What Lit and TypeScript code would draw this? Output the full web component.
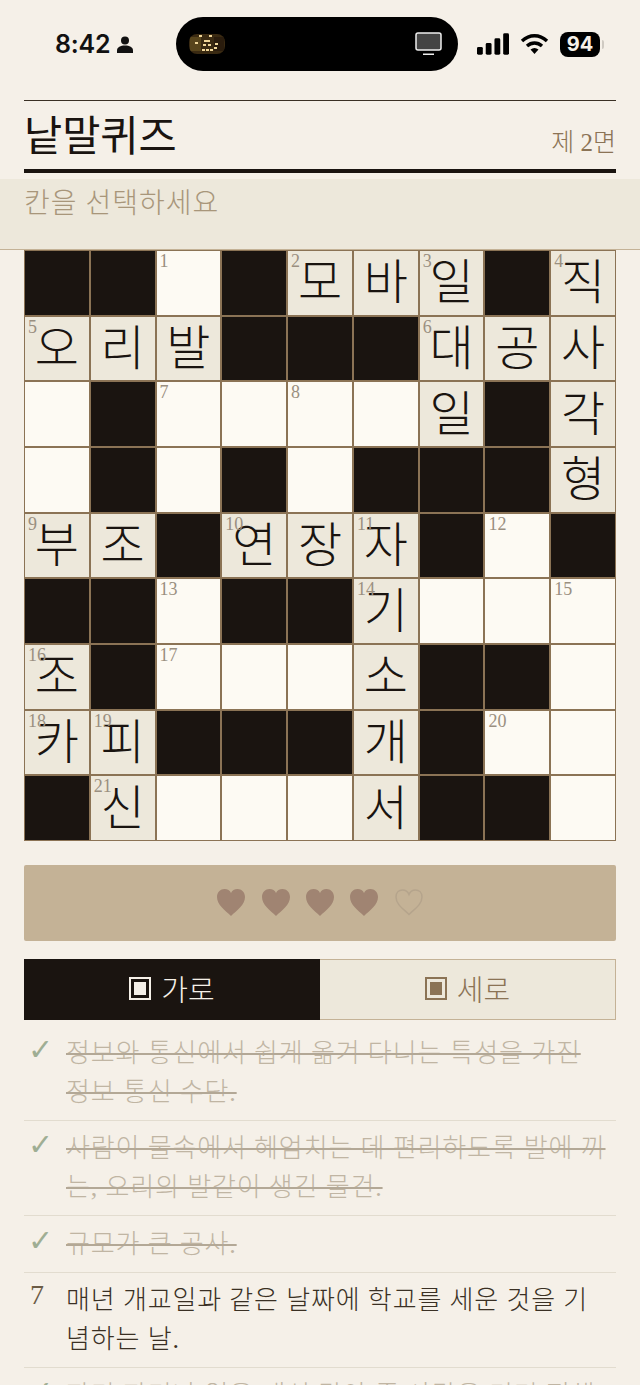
import { LitElement, html, css, svg } from "lit";
import { customElement } from "lit/decorators.js";

type Cell = { k: "b" } | { k: "w"; n?: string; t?: string };
const B: Cell = { k: "b" };
const w = (n?: string, t?: string): Cell => ({ k: "w", n, t });
const GRID: Cell[][] = [
  [B, B, w("1"), B, w("2", "모"), w("", "바"), w("3", "일"), B, w("4", "직")],
  [w("5", "오"), w("", "리"), w("", "발"), B, B, B, w("6", "대"), w("", "공"), w("", "사")],
  [w(), B, w("7"), w(), w("8"), w(), w("", "일"), B, w("", "각")],
  [w(), B, w(), B, w(), B, B, B, w("", "형")],
  [w("9", "부"), w("", "조"), B, w("10", "연"), w("", "장"), w("11", "자"), B, w("12"), B],
  [B, B, w("13"), B, B, w("14", "기"), w(), w(), w("15")],
  [w("16", "조"), B, w("17"), w(), w(), w("", "소"), B, B, w()],
  [w("18", "카"), w("19", "피"), B, B, B, w("", "개"), B, w("20"), w()],
  [B, w("21", "신"), w(), w(), w(), w("", "서"), B, B, w()],
];

const CLUES = [
  { m: "✓", t: "정보와 통신에서 쉽게 옮겨 다니는 특성을 가진 정보 통신 수단.", done: true },
  { m: "✓", t: "사람이 물속에서 헤엄치는 데 편리하도록 발에 끼는, 오리의 발같이 생긴 물건.", done: true },
  { m: "✓", t: "규모가 큰 공사.", done: true },
  { m: "7", t: "매년 개교일과 같은 날짜에 학교를 세운 것을 기념하는 날.", done: false },
  { m: "✓", t: "자기 자리나 일을 대신 맡아 줄 사람을 미리 정해 놓은 일.", done: true },
];

const heartPath = "M14 27C8 21 0 16 0 8 0 3 3.500 0 7.500 0 10.500 0 13 1.500 14 4 15 1.500 17.500 0 20.500 0 24.500 0 28 3 28 8 28 16 20 21 14 27Z";
const heartOutline = "M14 25.500C8.500 20 1 15.500 1 8 1 3.500 4 1 7.500 1 10.500 1 13 3 14 5.500 15 3 17.500 1 20.500 1 24 1 27 3.500 27 8 27 15.500 19.500 20 14 25.500Z";

@customElement("app-root")
export class AppRoot extends LitElement {
  static styles = css`
    :host {
      display: block;
      width: 640px;
      height: 1385px;
      overflow: hidden;
      background: #f5f0e8;
      color: #1a1410;
      font-family: "Liberation Serif", "Noto Sans CJK KR", serif;
      font-weight: 300;
    }
    .status { height: 100px; display: flex; padding-top: 17px; box-sizing: border-box; }
    .st-left { width: 176px; height: 54px; padding-left: 55px; box-sizing: border-box; display: flex; align-items: center; gap: 7px; }
    .time { font: 600 25px/1 "Inter", "Liberation Sans", sans-serif; color: #111; letter-spacing: -0.2px; }
    .island { width: 282px; height: 54px; border-radius: 27px; background: #000; display: flex; align-items: center; justify-content: space-between; padding: 0 16px 0 13px; box-sizing: border-box; }
    .st-right { height: 54px; padding-left: 19px; display: flex; align-items: center; gap: 11px; }
    .batt { width: 40px; height: 25px; border-radius: 8px; background: #000; color: #f5f0e8; font: 700 20px/25px "Inter", "Liberation Sans", sans-serif; text-align: center; position: relative; }
    .batt::after { content: ""; position: absolute; left: 42px; top: 8px; width: 2px; height: 9px; border-radius: 0 2px 2px 0; background: #cfcac2; }

    .mast { margin: 0 24px; border-top: 1px solid #3a3024; border-bottom: 4px solid #1a1410; height: 73px; box-sizing: border-box; display: flex; align-items: center; justify-content: space-between; }
    .title { font: 400 41.500px/1 "Noto Sans CJK KR", sans-serif; margin-top: -3px; }
    .page { font-size: 25px; line-height: 1; color: #8b7355; margin-top: 14px; }
    .hint { margin-top: 6px; height: 71px; box-sizing: border-box; background: #ede8db; border-bottom: 1px solid #c4b296; padding: 6px 24px 0; font-size: 28px; line-height: 37px; letter-spacing: 1px; color: #a8967a; }

    .grid { margin: 0 24px; display: grid; grid-template-columns: repeat(9, 1fr); grid-auto-rows: 63.670px; gap: 2px; padding: 1px; background: #8b7355; }
    .cell { position: relative; background: #fdfaf3; display: flex; align-items: center; justify-content: center; }
    .cell.b { background: #1a1410; }
    .cell.f { background: #ede8db; }
    .n { position: absolute; left: 3px; top: 0; font-size: 18px; line-height: 20px; color: #9a8f80; z-index: 1; }
    .ch { font: 300 48px/1 "Noto Sans CJK KR", sans-serif; color: #1a1410; margin-top: -9px; }

    .lives { margin: 24px 24px 0; height: 76px; border-radius: 2px; background: #c4b296; display: flex; align-items: center; justify-content: center; gap: 16.300px; }
    .lives svg { display: block; width: 28px; height: 27px; }

    .tabs { margin: 18px 24px 0; height: 61px; display: grid; grid-template-columns: 296px 296px; }
    .tab { display: flex; align-items: center; justify-content: center; gap: 10px; font-size: 29px; box-sizing: border-box; padding-bottom: 2px; }
    .tab.on { background: #1a1410; color: #f5f0e8; }
    .tab.off { background: #ede8db; color: #8b7355; border: 1px solid #c4b296; border-left: none; }
    .ico { width: 22px; height: 23px; box-sizing: border-box; border: 2px solid currentColor; display: flex; align-items: center; justify-content: center; }
    .ico i { display: block; width: 12px; height: 13px; background: currentColor; }

    .clues { margin: 6px 24px 0; padding: 0; list-style: none; }
    .clue { display: flex; padding: 8.150px 0; border-bottom: 1px solid #e2dccf; font-size: 26px; line-height: 39px; }
    .m { width: 42px; flex: none; padding-left: 6px; box-sizing: border-box; font-size: 28px; line-height: 28px; color: #6b5b45; }
    .m.ok { font-family: "DejaVu Sans", sans-serif; font-size: 30px; line-height: 32px; padding-left: 4px; color: #9fae94; }
    .t { color: #3a3024; letter-spacing: 0.85px; padding-right: 8px; }
    .clue.d .t { color: #c0b5a3; text-decoration: line-through; text-decoration-color: #b3a896; text-decoration-thickness: 1.500px; }
  `;

  private statusRight() {
    return html`<div class="st-right">
      <svg width="32" height="22" viewBox="0 0 33 22" fill="#000">
        <rect x="0" y="14" width="6" height="8" rx="1.500"/><rect x="9" y="10" width="6" height="12" rx="1.500"/>
        <rect x="18" y="5" width="6" height="17" rx="1.500"/><rect x="27" y="0" width="6" height="22" rx="1.500"/>
      </svg>
      <svg width="29" height="22" viewBox="0 0 29 22" fill="none" stroke="#000" stroke-width="3.400">
        <path d="M2 8C9.500 1 19.500 1 27 8"/><path d="M7 13C11.500 9 17.500 9 22 13"/>
        <path d="M10.500 16.500L14.500 21 18.500 16.500C16 14.500 13 14.500 10.500 16.500Z" fill="#000" stroke="none"/>
      </svg>
      <div class="batt">94</div>
    </div>`;
  }

  private thumb() {
    return html`<svg width="36" height="20" viewBox="0 0 36 20">
      <defs>
        <filter id="soft"><feGaussianBlur stdDeviation="0.500"/></filter>
        <clipPath id="thumb"><rect width="36" height="20" rx="8"/></clipPath>
      </defs>
      <g clip-path="url(#thumb)">
        <rect width="36" height="20" fill="#3a2a12"/>
        <g filter="url(#soft)">
          <rect x="1" y="3" width="11" height="14" fill="#59441f"/>
          <rect x="25" y="3" width="10" height="14" fill="#2a1c0c"/>
          ${[[10, 1], [20, 1], [26, 9], [15, 6], [18, 6], [14, 10], [19, 10], [6, 8], [25, 13], [13, 15], [17, 15], [21, 15]].map(
            ([x, y]) => svg`<rect x=${x} y=${y} width="3" height="2" fill="#f0d699"/>`
          )}
        </g>
      </g>
    </svg>`;
  }

  private heart(filled: boolean) {
    return html`<svg viewBox="0 0 28 27">
      ${filled
        ? svg`<path d=${heartPath} fill="#a08472"/>`
        : svg`<path d=${heartOutline} fill="none" stroke="#b5a48c" stroke-width="1.500"/>`}
    </svg>`;
  }

  render() {
    return html`
      <div class="status">
        <div class="st-left">
          <span class="time">8:42</span>
          <svg width="16" height="17" viewBox="0 0 16 17" fill="#111">
            <circle cx="8" cy="4.500" r="4"/><path d="M0 17V14.500C0 11 3.500 9.500 8 9.500S16 11 16 14.500V17Z"/>
          </svg>
        </div>
        <div class="island">
          ${this.thumb()}
          <svg width="27" height="24" viewBox="0 0 27 24">
            <rect x="1" y="1" width="25" height="17" rx="2" fill="#444" stroke="#eee" stroke-width="1.500"/>
            <rect x="8" y="21.500" width="11" height="1.500" fill="#eee"/>
          </svg>
        </div>
        ${this.statusRight()}
      </div>
      <div class="mast">
        <span class="title">낱말퀴즈</span>
        <span class="page">제 2면</span>
      </div>
      <div class="hint">칸을 선택하세요</div>
      <div class="grid">
        ${GRID.flat().map((c) =>
          c.k === "b"
            ? html`<div class="cell b"></div>`
            : html`<div class="cell ${c.t ? "f" : ""}">
                ${c.n ? html`<span class="n">${c.n}</span>` : ""}
                ${c.t ? html`<span class="ch">${c.t}</span>` : ""}
              </div>`
        )}
      </div>
      <div class="lives">${[1, 1, 1, 1, 0].map((f) => this.heart(!!f))}</div>
      <div class="tabs">
        <div class="tab on"><span class="ico"><i></i></span>가로</div>
        <div class="tab off"><span class="ico"><i></i></span>세로</div>
      </div>
      <ul class="clues">
        ${CLUES.map(
          (c) => html`<li class="clue ${c.done ? "d" : ""}">
            <span class="m ${c.done ? "ok" : ""}">${c.m}</span>
            <span class="t">${c.t}</span>
          </li>`
        )}
      </ul>
    `;
  }
}
